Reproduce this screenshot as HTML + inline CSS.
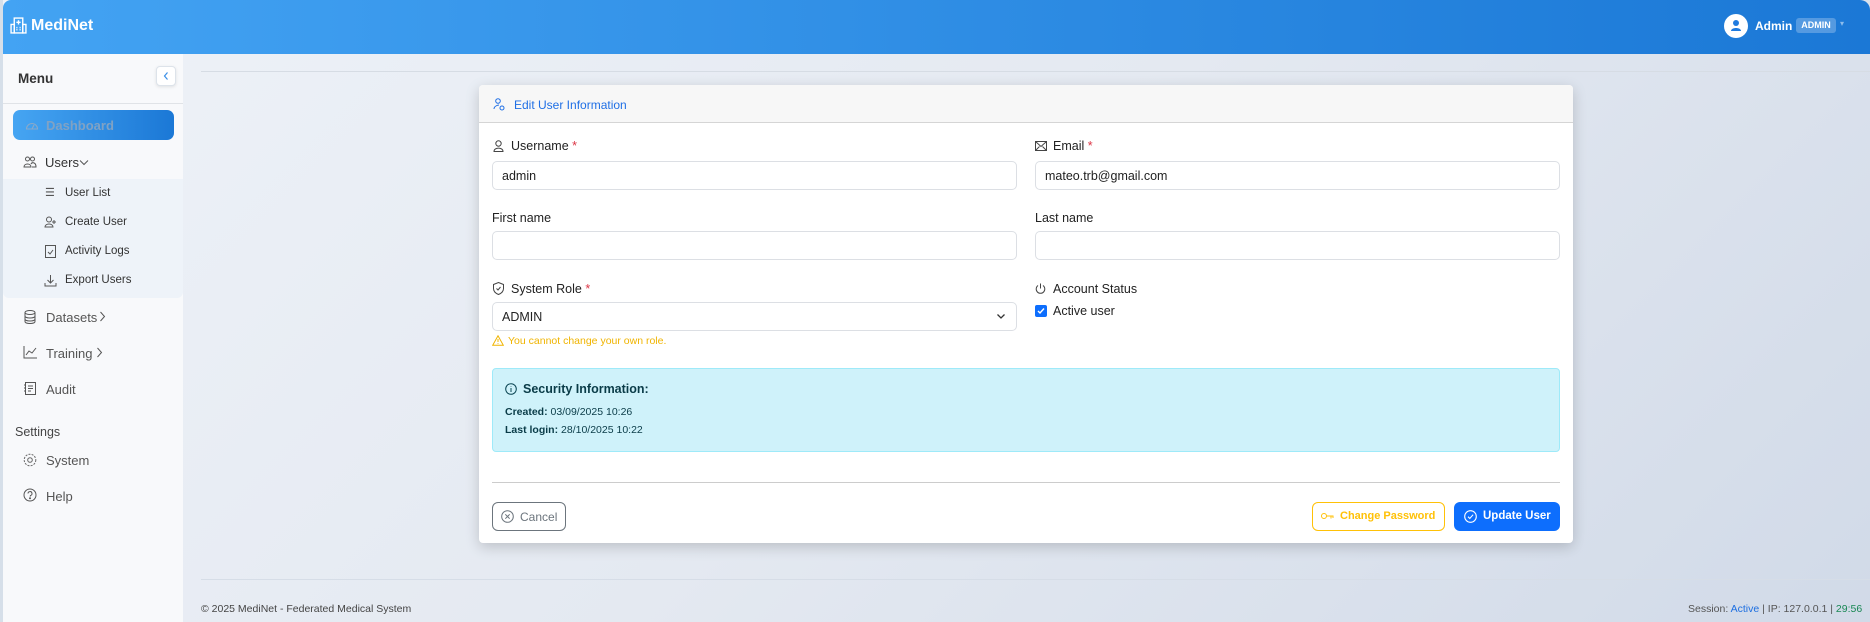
<!DOCTYPE html>
<html><head><meta charset="utf-8"><style>
*{box-sizing:border-box;margin:0;padding:0}
body{width:1870px;height:622px;overflow:hidden;font-family:"Liberation Sans",sans-serif;background:linear-gradient(135deg,#eef2f8 0%,#e4e9f1 50%,#d1dae8 100%);position:relative;color:#212529}
.abs{position:absolute}
.hdr{left:3px;top:0;width:1867px;height:54px;background:linear-gradient(90deg,#43a3f3,#1b78d6);border-top-left-radius:8px;border-top-right-radius:10px}
.side{left:3px;top:54px;width:180px;height:568px;background:#f8f9fb}
.lstrip{left:0;top:0;width:3px;height:622px;background:#d6dfe9}
.t{position:absolute;white-space:nowrap}
.si{font-size:13px;color:#555}
.sub{font-size:11.5px;color:#333}
svg{position:absolute}
.card{left:479px;top:85px;width:1094px;height:458px;background:#fff;border-radius:4px;box-shadow:0 4px 14px rgba(0,0,0,.18)}
.lbl{font-size:12.5px;color:#222}
.inp{position:absolute;height:29px;border:1px solid #dcdfe4;border-radius:5px;background:#fff;font-size:12.5px;padding:7px 9px;color:#222}
.req{color:#dc3545}
</style></head><body>
<div class="abs lstrip"></div>
<div class="abs hdr"></div>
<svg style="left:10px;top:17px" width="17" height="17" viewBox="0 0 16 16" fill="none" stroke="#fff" stroke-width="1.3"><rect x="4" y="1" width="8" height="14"/><rect x="1" y="7" width="3" height="8"/><rect x="12" y="7" width="3" height="8"/><path d="M8 3v4M6 5h4M6 10h1M9 10h1M6 12h1M9 12h1"/></svg>
<div class="t" style="left:31px;top:17px;color:#fff;font-weight:bold;font-size:16px">MediNet</div>
<div class="abs" style="left:1724px;top:14px;width:24px;height:24px;border-radius:50%;background:#fff"></div>
<svg style="left:1730px;top:19px" width="12" height="13" viewBox="0 0 12 13"><circle cx="6" cy="4" r="3" fill="#1f7be0"/><path d="M1 12c0-4 10-4 10 0z" fill="#1f7be0"/></svg>
<div class="t" style="left:1755px;top:19px;color:#fff;font-weight:bold;font-size:12px">Admin</div>
<div class="abs" style="left:1796px;top:18px;width:40px;height:15px;background:rgba(255,255,255,.25);border-radius:3px;color:#fff;font-size:9px;font-weight:bold;text-align:center;line-height:15px">ADMIN</div>
<div class="t" style="left:1840px;top:19px;color:rgba(255,255,255,.5);font-size:8px">▾</div>

<div class="abs side"></div>
<div class="t" style="left:18px;top:71px;font-size:13.5px;font-weight:bold;color:#333">Menu</div>
<div class="abs" style="left:156px;top:66px;width:20px;height:20px;background:#fff;border:1px solid #dde3ea;border-radius:4px;box-shadow:0 1px 3px rgba(0,0,0,.1)"></div>
<svg style="left:162px;top:71px" width="8" height="10" viewBox="0 0 8 10"><path d="M5.5 1.5L2.5 5l3 3.5" stroke="#3a8ee6" stroke-width="1.2" fill="none"/></svg>
<div class="abs" style="left:3px;top:103px;width:180px;height:1px;background:#e0e3e7"></div>
<div class="abs" style="left:13px;top:110px;width:161px;height:30px;border-radius:7px;background:linear-gradient(90deg,#46a5f2,#1b78d6)"></div>
<svg style="left:25px;top:119px" width="14" height="12" viewBox="0 0 14 12" fill="none" stroke="#8aa9c9" stroke-width="1.1"><path d="M1.5 10a5.5 5.5 0 0 1 11 0z"/><path d="M7 10l2-4"/></svg>
<div class="t" style="left:46px;top:118px;font-size:13px;font-weight:bold;color:#80a2c4">Dashboard</div>
<svg style="left:23px;top:156px" width="14" height="12" viewBox="0 0 14 12" fill="none" stroke="#555" stroke-width="1"><circle cx="4.5" cy="3" r="2"/><circle cx="9.5" cy="3" r="2"/><path d="M1 11c0-4 7-4 7 0zM8 8c1-2 5-2 5 3H9"/></svg>
<div class="t" style="left:45px;top:155px;font-size:13px;color:#333">Users</div>
<svg style="left:79px;top:159px" width="10" height="7" viewBox="0 0 10 7"><path d="M1 1.5l4 4 4-4" stroke="#555" fill="none"/></svg>
<div class="abs" style="left:3px;top:179px;width:180px;height:119px;background:#eef3f9;border-radius:0 0 6px 6px"></div>
<div class="t" style="left:45px;top:186px;font-size:11px;color:#555">☰</div>
<div class="t sub" style="left:65px;top:187px">User List</div>
<svg style="left:44px;top:216px" width="13" height="12" viewBox="0 0 13 12" fill="none" stroke="#555" stroke-width="1"><circle cx="5" cy="3.5" r="2.5"/><path d="M1 11c0-4 8-4 8 0zM10 4v4M8 6h4"/></svg>
<div class="t sub" style="left:65px;top:216px">Create User</div>
<svg style="left:45px;top:245px" width="11" height="13" viewBox="0 0 11 13" fill="none" stroke="#555" stroke-width="1"><rect x="0.5" y="0.5" width="10" height="12"/><path d="M3 7l2 2 3-4"/></svg>
<div class="t sub" style="left:65px;top:245px">Activity Logs</div>
<svg style="left:44px;top:274px" width="13" height="13" viewBox="0 0 13 13" fill="none" stroke="#555" stroke-width="1"><path d="M6.5 1v8M3.5 6l3 3 3-3M1 9v3h11V9"/></svg>
<div class="t sub" style="left:65px;top:274px">Export Users</div>
<svg style="left:24px;top:310px" width="12" height="14" viewBox="0 0 12 14" fill="none" stroke="#555" stroke-width="1"><ellipse cx="6" cy="2.5" rx="5" ry="2"/><path d="M1 2.5v9c0 2.7 10 2.7 10 0v-9M1 6c0 2.7 10 2.7 10 0M1 9c0 2.7 10 2.7 10 0"/></svg>
<div class="t si" style="left:46px;top:310px">Datasets</div>
<svg style="left:99px;top:311px" width="7" height="11" viewBox="0 0 7 11"><path d="M1.5 1l4 4.5-4 4.5" stroke="#555" fill="none"/></svg>
<svg style="left:23px;top:346px" width="14" height="13" viewBox="0 0 14 13" fill="none" stroke="#555" stroke-width="1"><path d="M1 0v12h13M3 9l3-4 3 2 4-5"/></svg>
<div class="t si" style="left:46px;top:346px">Training</div>
<svg style="left:96px;top:347px" width="7" height="11" viewBox="0 0 7 11"><path d="M1.5 1l4 4.5-4 4.5" stroke="#555" fill="none"/></svg>
<svg style="left:24px;top:382px" width="12" height="13" viewBox="0 0 12 13" fill="none" stroke="#555" stroke-width="1"><rect x="1.5" y="0.5" width="10" height="12"/><path d="M4 4h5M4 6.5h5M4 9h3M0 3h2M0 6h2M0 9h2"/></svg>
<div class="t si" style="left:46px;top:382px">Audit</div>
<div class="t" style="left:15px;top:425px;font-size:12.5px;color:#444">Settings</div>
<svg style="left:23px;top:453px" width="14" height="14" viewBox="0 0 14 14" fill="none" stroke="#666" stroke-width="1"><circle cx="7" cy="7" r="2.3"/><circle cx="7" cy="7" r="5.8" stroke-dasharray="2 1.2"/></svg>
<div class="t si" style="left:46px;top:453px">System</div>
<svg style="left:23px;top:488px" width="14" height="14" viewBox="0 0 14 14" fill="none" stroke="#555" stroke-width="1"><circle cx="7" cy="7" r="6"/><path d="M5 5.5a2 2 0 1 1 2.5 2L7 8.5"/><circle cx="7" cy="10.3" r=".5" fill="#555"/></svg>
<div class="t si" style="left:46px;top:489px">Help</div>

<div class="abs" style="left:201px;top:71px;width:1669px;height:1px;background:#d6dce4"></div>
<div class="abs" style="left:201px;top:579px;width:1669px;height:1px;background:#d6dde7"></div>
<div class="t" style="left:201px;top:603px;font-size:10.5px;color:#444">© 2025 MediNet - Federated Medical System</div>
<div class="t" style="left:1688px;top:603px;font-size:10.5px;color:#555">Session: <span style="color:#1d6fe0">Active</span> | IP: 127.0.0.1 | <span style="color:#198754">29:56</span></div>

<div class="abs card">
 <div class="abs" style="left:0;top:0;width:1094px;height:38px;background:#f7f7f7;border-bottom:1px solid #d5d5d5;border-radius:4px 4px 0 0"></div>
</div>
<svg style="left:493px;top:98px" width="12" height="13" viewBox="0 0 12 13" fill="none" stroke="#1f6fe5" stroke-width="1"><circle cx="5" cy="3" r="2.3"/><path d="M1 11c0-3 4-4 5-4"/><circle cx="9" cy="10" r="2"/></svg>
<div class="t" style="left:514px;top:98px;font-size:12px;color:#1f6fe5">Edit User Information</div>

<svg style="left:493px;top:140px" width="11" height="12" viewBox="0 0 11 12" fill="none" stroke="#444" stroke-width="1"><circle cx="5.5" cy="3.5" r="2.7"/><path d="M1 11.5c0-4.5 9-4.5 9 0z"/></svg>
<div class="t lbl" style="left:511px;top:139px">Username <span class="req">*</span></div>
<div class="inp" style="left:492px;top:161px;width:525px">admin</div>
<svg style="left:1035px;top:141px" width="12" height="10" viewBox="0 0 12 10" fill="none" stroke="#444" stroke-width="1"><rect x=".5" y=".5" width="11" height="9"/><path d="M.5 .5l5.5 5 5.5-5M.5 9.5l4-4M11.5 9.5l-4-4"/></svg>
<div class="t lbl" style="left:1053px;top:139px">Email <span class="req">*</span></div>
<div class="inp" style="left:1035px;top:161px;width:525px">mateo.trb@gmail.com</div>

<div class="t lbl" style="left:492px;top:211px">First name</div>
<div class="inp" style="left:492px;top:231px;width:525px"></div>
<div class="t lbl" style="left:1035px;top:211px">Last name</div>
<div class="inp" style="left:1035px;top:231px;width:525px"></div>

<svg style="left:493px;top:282px" width="11" height="13" viewBox="0 0 11 13" fill="none" stroke="#444" stroke-width="1"><path d="M5.5 .5L10.5 2.5v4c0 3-2.5 5-5 6-2.5-1-5-3-5-6v-4z"/><path d="M3.5 6.5l1.5 1.5 2.5-3"/></svg>
<div class="t lbl" style="left:511px;top:282px">System Role <span class="req">*</span></div>
<div class="inp" style="left:492px;top:302px;width:525px">ADMIN</div>
<svg style="left:996px;top:313px" width="10" height="7" viewBox="0 0 10 7"><path d="M1.5 1.5l3.5 3.5 3.5-3.5" stroke="#333" stroke-width="1.3" fill="none"/></svg>
<svg style="left:492px;top:335px" width="12" height="11" viewBox="0 0 12 11" fill="none" stroke="#f0b400" stroke-width="1"><path d="M6 .8L11.3 10.3H.7z"/><path d="M6 4v3M6 8.3v.7"/></svg>
<div class="t" style="left:508px;top:335px;font-size:10.5px;color:#f0b400">You cannot change your own role.</div>

<svg style="left:1035px;top:283px" width="11" height="12" viewBox="0 0 11 12" fill="none" stroke="#444" stroke-width="1"><path d="M5.5 .5v5M3 2.5a4.3 4.3 0 1 0 5 0"/></svg>
<div class="t lbl" style="left:1053px;top:282px">Account Status</div>
<div class="abs" style="left:1035px;top:305px;width:12px;height:12px;border-radius:2px;background:#0d6efd"></div>
<svg style="left:1037px;top:307px" width="8" height="8" viewBox="0 0 8 8"><path d="M1 4l2 2 4-4.5" stroke="#fff" stroke-width="1.4" fill="none"/></svg>
<div class="t lbl" style="left:1053px;top:304px">Active user</div>

<div class="abs" style="left:492px;top:368px;width:1068px;height:84px;background:#cff2fa;border:1px solid #9eeaf9;border-radius:4px"></div>
<svg style="left:505px;top:383px" width="12" height="12" viewBox="0 0 12 12" fill="none" stroke="#0a4553" stroke-width="1"><circle cx="6" cy="6" r="5.3"/><path d="M6 5v4M6 3.2v.6"/></svg>
<div class="t" style="left:523px;top:382px;font-size:12.5px;font-weight:bold;color:#0a3c48">Security Information:</div>
<div class="t" style="left:505px;top:406px;font-size:10.5px;color:#0a3c48"><b>Created:</b> 03/09/2025 10:26</div>
<div class="t" style="left:505px;top:424px;font-size:10.5px;color:#0a3c48"><b>Last login:</b> 28/10/2025 10:22</div>

<div class="abs" style="left:492px;top:482px;width:1068px;height:1px;background:#ccc"></div>
<div class="abs" style="left:492px;top:502px;width:74px;height:29px;border:1px solid #6c757d;border-radius:6px"></div>
<svg style="left:501px;top:510px" width="13" height="13" viewBox="0 0 13 13" fill="none" stroke="#6c757d" stroke-width="1"><circle cx="6.5" cy="6.5" r="5.8"/><path d="M4.3 4.3l4.4 4.4M8.7 4.3l-4.4 4.4"/></svg>
<div class="t" style="left:520px;top:510px;font-size:12px;color:#6c757d">Cancel</div>
<div class="abs" style="left:1312px;top:502px;width:133px;height:29px;border:1px solid #ffc107;border-radius:6px"></div>
<svg style="left:1321px;top:512px" width="13" height="8" viewBox="0 0 13 8" fill="none" stroke="#ffc107" stroke-width="1"><circle cx="3" cy="4" r="2.5"/><path d="M5.5 4h7M10 4v2.5M12 4v2"/></svg>
<div class="t" style="left:1340px;top:510px;font-size:11px;color:#ffc107;font-weight:bold">Change Password</div>
<div class="abs" style="left:1454px;top:502px;width:106px;height:29px;background:#0d6efd;border-radius:6px"></div>
<svg style="left:1464px;top:510px" width="13" height="13" viewBox="0 0 13 13" fill="none" stroke="#fff" stroke-width="1.1"><circle cx="6.5" cy="6.5" r="5.8"/><path d="M4 6.7l1.8 1.8 3.3-3.8"/></svg>
<div class="t" style="left:1483px;top:510px;font-size:11.5px;color:#fff;font-weight:bold">Update User</div>
</body></html>
